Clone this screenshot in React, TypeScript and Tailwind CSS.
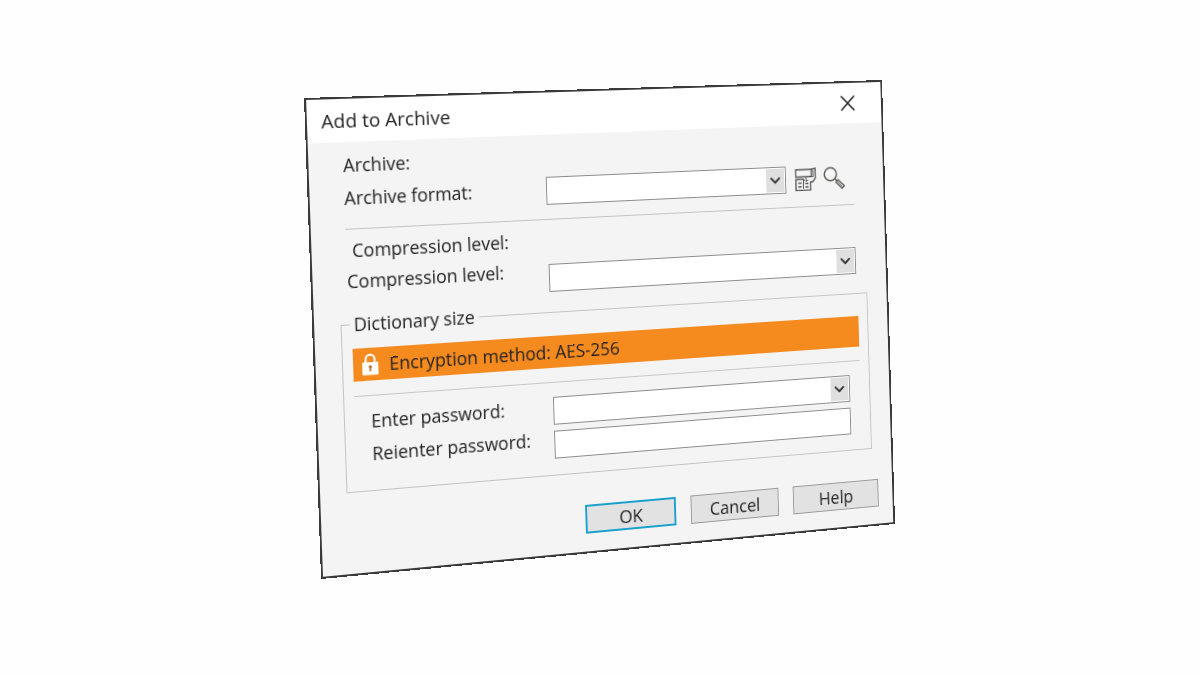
import type { ReactNode } from "react";
import { ChevronDown, X } from "lucide-react";

function ComboBox({ id }: { id: string }) {
    return (
        <div className="relative min-w-0 flex-1">
            <select
                id={id}
                className="block h-7 w-full appearance-none border border-[#8c8c8c] bg-white pl-2 pr-7 outline-none"
            >
                <option value=""></option>
            </select>
            <span className="pointer-events-none absolute inset-y-0.5 right-0.5 flex w-5 items-center justify-center bg-[#dfdfdf]">
                <ChevronDown className="size-[18px] shrink-0 text-[#333]" strokeWidth={2.5} />
            </span>
        </div>
    );
}

function SaveProfileIcon() {
    return (
        <svg viewBox="0 0 24 24" className="size-6 shrink-0" fill="none" stroke="#555" strokeWidth="1.4">
            <path d="M1 2H18.5V9.5H1Z" />
            <path d="M18.5 2L23 1V11L20 15H17.5V23.5H1V12H9L11 13.5" />
            <path d="M9.5 13V22M12.5 9.5V14.500L15 13M20.500 2.500V9.500H18.500" strokeWidth="1" />
            <path d="M3.5 16H7.5M3.5 19.800H7.5M11.500 16.500H15M11.500 20H15" strokeWidth="1.6" />
        </svg>
    );
}

function BrowseIcon() {
    return (
        <svg viewBox="0 0 24 24" className="size-6 shrink-0" fill="none" stroke="#5e5a54">
            <circle cx="8" cy="8" r="6.8" fill="#f8f8f6" strokeWidth="1.6" />
            <path d="M12.8 12.8L15 15" strokeWidth="1.6" />
            <path d="M14 16.5L16.5 14L23.5 20.5L21 23.2Z" fill="#eee" strokeWidth="1.4" />
            <path d="M16 16L21.5 21.5" strokeWidth="1" />
        </svg>
    );
}

function LockIcon() {
    return (
        <svg viewBox="0 0 18 22" className="h-[22px] w-[18px] shrink-0" fill="none">
            <path d="M4.5 10V6.2a4.5 4.5 0 0 1 9 0V10" stroke="#fff" strokeWidth="2" />
            <rect x="1" y="9" width="16" height="12.5" rx="1" fill="#fff" />
            <circle cx="9" cy="13.5" r="1.6" fill="#b8651a" />
            <path d="M9 14v4" stroke="#b8651a" strokeWidth="1.5" />
        </svg>
    );
}

function ToolButton({ label, children }: { label: string; children: ReactNode }) {
    return (
        <button type="button" aria-label={label} className="flex size-6 shrink-0 items-center justify-center">
            {children}
        </button>
    );
}

function DialogButton({ children, primary = false }: { children: ReactNode; primary?: boolean }) {
    return (
        <button
            type="button"
            className={`flex h-[29px] w-[97px] items-center justify-center bg-[#e2e2e2] ${
                primary ? "border-2 border-[#1aa0cc]" : "border border-[#999]"
            }`}
        >
            {children}
        </button>
    );
}

export default function App() {
    return (
        <main className="flex min-h-screen items-center justify-center bg-[#fefefe] font-['Open_Sans','Noto_Sans',sans-serif] text-lg leading-6 text-[#222]">
            <div
                role="dialog"
                aria-labelledby="dialog-title"
                className="w-full max-w-[612px] origin-top-left border-2 border-[#3a3a3d] bg-[#f4f4f4] [transform:matrix3d(1.025294,-0.03285,0,0.0001375,0.036854,1.037406,0,0.0000108877,0,0,1,0,10,-7,0,1)]"
            >
                <header className="flex h-[42px] items-center justify-between bg-white pl-3.5 pr-6">
                    <h1 id="dialog-title" className="text-[19px] leading-6">
                        Add to Archive
                    </h1>
                    <button type="button" aria-label="Close" className="flex size-7 items-center justify-center">
                        <X className="size-7 shrink-0" strokeWidth={1.5} />
                    </button>
                </header>

                <form>
                    <section className="mx-8.5 border-b border-[#c4c4c4] pb-3.5 pt-2.5">
                        <p>Archive:</p>
                        <div className="mt-2 flex items-start">
                            <label htmlFor="format" className="w-[205px] shrink-0">
                                Archive format:
                            </label>
                            <div className="flex min-w-0 flex-1 items-center gap-2.5 pr-2.5">
                                <ComboBox id="format" />
                                <div className="flex gap-2">
                                    <ToolButton label="Save profile">
                                        <SaveProfileIcon />
                                    </ToolButton>
                                    <ToolButton label="Browse">
                                        <BrowseIcon />
                                    </ToolButton>
                                </div>
                            </div>
                        </div>
                    </section>

                    <section className="mx-8.5 pt-2">
                        <p className="pl-1.5">Compression level:</p>
                        <div className="mt-1.5 flex items-start">
                            <label htmlFor="level" className="w-[205px] shrink-0">
                                Compression level:
                            </label>
                            <div className="flex min-w-0 flex-1 pt-1.5">
                                <ComboBox id="level" />
                            </div>
                        </div>
                    </section>

                    <fieldset className="ml-6.5 mr-5.5 mt-2 border border-[#c4c4c4] px-2.5 pb-4">
                        <legend className="-ml-0.5 px-1">Dictionary size</legend>
                        <div className="mt-3 flex h-8 items-center gap-2.5 bg-[#f58a1f] px-2">
                            <LockIcon />
                            <span>Encryption method: AES-256</span>
                        </div>
                        <hr className="mt-3.5 border-[#c8c8c8]" />
                        <div className="mt-3.5 flex flex-col gap-1.5 pl-4 pr-3">
                            <div className="flex items-start">
                                <label htmlFor="password" className="w-[186px] shrink-0 leading-5">
                                    Enter password:
                                </label>
                                <ComboBox id="password" />
                            </div>
                            <div className="flex items-start">
                                <label htmlFor="password-repeat" className="w-[186px] shrink-0 leading-4">
                                    Reienter password:
                                </label>
                                <input
                                    id="password-repeat"
                                    type="password"
                                    className="h-7 min-w-0 flex-1 border border-[#8c8c8c] bg-white px-2 outline-none"
                                />
                            </div>
                        </div>
                    </fieldset>

                    <footer className="flex justify-end gap-4 pb-4.5 pl-4 pr-4 pt-8">
                        <DialogButton primary>OK</DialogButton>
                        <DialogButton>Cancel</DialogButton>
                        <DialogButton>Help</DialogButton>
                    </footer>
                </form>
            </div>
        </main>
    );
}
